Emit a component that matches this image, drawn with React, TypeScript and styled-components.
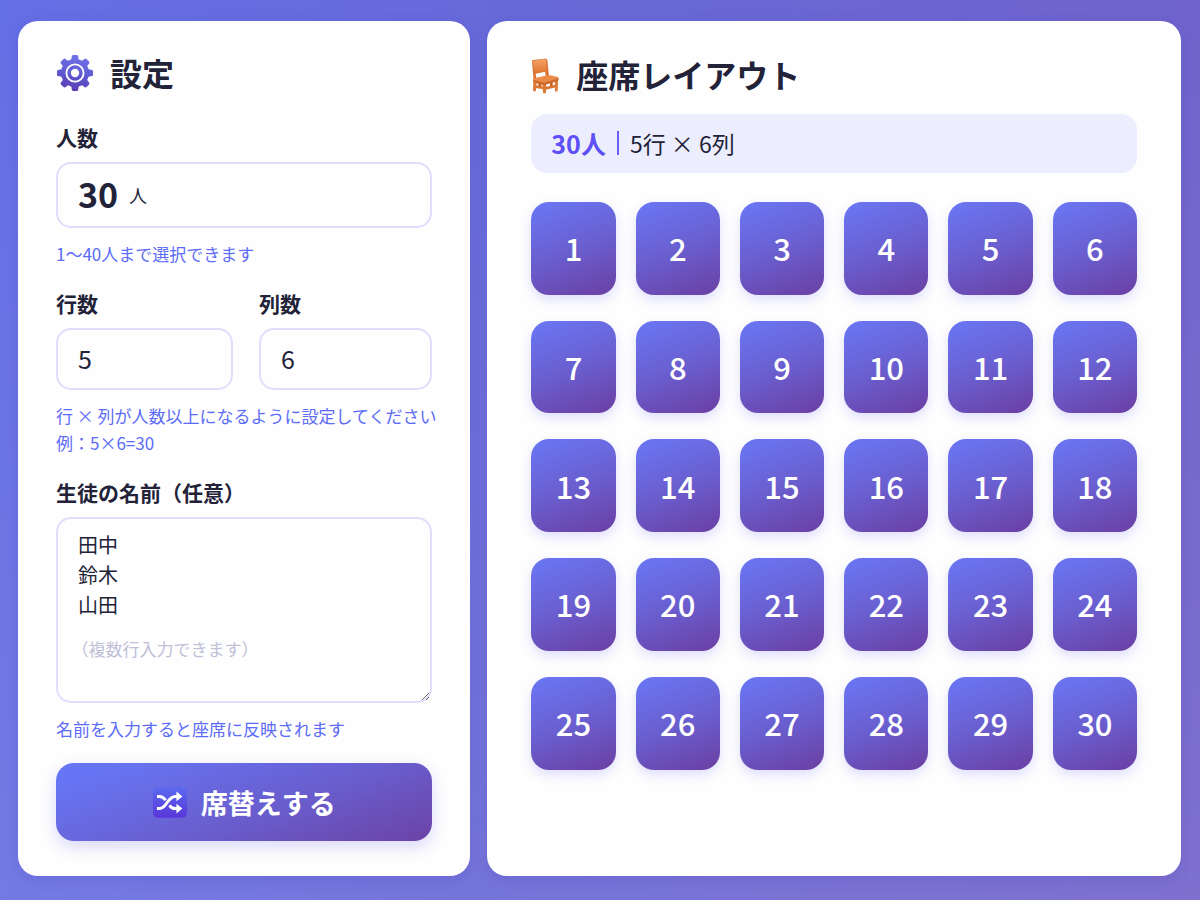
import React, { useState } from "react";
import styled, { createGlobalStyle } from "styled-components";

const GlobalStyle = createGlobalStyle`
  *, *::before, *::after { box-sizing: border-box; }
  body {
    margin: 0;
    font-family: "Noto Sans CJK JP", "Noto Sans", sans-serif;
    color: #222338;
  }
  input, textarea, button { font-family: inherit; color: inherit; }
`;

const Page = styled.main`
  min-height: 100vh;
  padding: 21px 19px 24px 18px;
  display: grid;
  grid-template-columns: minmax(0, 15fr) minmax(0, 23fr);
  gap: 17px;
  background:
    linear-gradient(180deg, rgba(255, 255, 255, 0), rgba(255, 255, 255, 0.09)),
    linear-gradient(100deg, #656fe5 0%, #6868d6 45%, #7262c9 100%);

  @media (max-width: 1100px) {
    grid-template-columns: minmax(0, 1fr);
  }
`;

const Card = styled.section<{ $pad: string }>`
  padding: ${(p) => p.$pad};
  border-radius: 20px;
  background: #fefefe;
  box-shadow: 0 4px 14px rgba(70, 60, 190, 0.2);
`;

const Title = styled.h2<{ $gap: number; $below: number }>`
  margin: 0 0 ${(p) => p.$below}px;
  min-height: 40px;
  display: flex;
  align-items: flex-start;
  gap: ${(p) => p.$gap}px;
  font-size: 32px;
  line-height: 36px;
  font-weight: 700;

  svg { flex: none; }
`;

const Field = styled.div`
  min-width: 0;
`;

const FieldPair = styled.div`
  display: grid;
  grid-template-columns: minmax(0, 51fr) minmax(0, 50fr);
  gap: 26px;
`;

const Group = styled.div`
  margin-bottom: 23px;

  &:last-of-type { margin-bottom: 21px; }
`;

const Label = styled.label`
  display: block;
  margin-bottom: 12px;
  font-size: 21px;
  line-height: 26px;
  font-weight: 700;
`;

const boxed = `
  border: 2px solid #dfdefc;
  border-radius: 15px;
  background: #fefefe;
`;

const CountBox = styled.div`
  ${boxed}
  height: 66px;
  padding: 0 20px;
  display: flex;
  align-items: center;
  gap: 11px;
`;

const CountInput = styled.input`
  width: 2ch;
  height: 62px;
  padding: 0 0 3px;
  border: 0;
  outline: 0;
  background: none;
  font-size: 34px;
  font-weight: 700;
`;

const Unit = styled.span`
  font-size: 18px;
  line-height: 28px;
`;

const NumberInput = styled.input`
  ${boxed}
  display: block;
  width: 100%;
  height: 62px;
  padding: 0 20px 3px;
  font-size: 25px;
`;

const Hint = styled.p`
  margin: 12px 0 0;
  font-size: 17px;
  line-height: 27px;
  color: #5c6cf6;

  @media (min-width: 1101px) {
    white-space: nowrap;
  }
`;

const NamesWrap = styled.div`
  position: relative;
`;

const NamesInput = styled.textarea`
  ${boxed}
  display: block;
  width: 100%;
  height: 186px;
  padding: 11px 20px;
  font-size: 20px;
  line-height: 30px;
  resize: vertical;
`;

const NamesNote = styled.span`
  position: absolute;
  left: 24px;
  top: 118px;
  font-size: 17px;
  line-height: 28px;
  font-feature-settings: "halt";
  color: #bfc0d8;
  pointer-events: none;
`;

const ShuffleButton = styled.button`
  width: 100%;
  height: 78px;
  padding: 0 20px;
  display: flex;
  align-items: center;
  justify-content: center;
  gap: 14px;
  border: 0;
  border-radius: 18px;
  background: linear-gradient(160deg, #6775f4 10%, #695ccb 60%, #6b43a6 100%);
  box-shadow: 0 6px 16px rgba(100, 95, 235, 0.24);
  color: #fff;
  font-size: 27px;
  font-weight: 700;
  cursor: pointer;
`;

const Summary = styled.p`
  margin: 0 0 29px;
  height: 59px;
  padding: 0 20px 2px;
  display: flex;
  align-items: center;
  gap: 11px;
  border-radius: 16px;
  background: #ecedfd;
  font-size: 23px;
  line-height: 36px;
`;

const SummaryCount = styled.strong`
  font-size: 25px;
  font-weight: 700;
  color: #5d50f6;
`;

const SummaryRule = styled.span`
  width: 2px;
  height: 24px;
  background: #6a5ff0;
`;

const SeatGrid = styled.ol<{ $columns: number }>`
  margin: 0;
  padding: 0;
  list-style: none;
  display: grid;
  grid-template-columns: repeat(${(p) => p.$columns}, minmax(0, 1fr));
  gap: 26px 20px;
`;

const Seat = styled.li`
  aspect-ratio: 10 / 11;
  display: flex;
  align-items: center;
  justify-content: center;
  border-radius: 18px;
  background: linear-gradient(160deg, #6a77f5 0%, #6a5fd0 50%, #6a3fa3 100%);
  box-shadow: 0 5px 12px rgba(100, 95, 245, 0.2);
  color: #fff;
  font-size: 31px;
  line-height: 40px;
  font-weight: 500;
`;

const GearIcon = () => (
  <svg width="38" height="38" viewBox="0 0 38 38" aria-hidden="true">
    <defs>
      <linearGradient id="gear" gradientUnits="userSpaceOnUse" x1="22" y1="0" x2="15" y2="38">
        <stop offset="0" stopColor="#7273ea" />
        <stop offset="0.5" stopColor="#5f5bd3" />
        <stop offset="1" stopColor="#5a38ae" />
      </linearGradient>
      <mask id="gearShape">
        <circle cx="19" cy="19" r="14" fill="#fff" />
        {[0, 45, 90, 135, 180, 225, 270, 315].map((a) => (
          <path
            key={a}
            d="M15 7 15.9 2Q16.1 1 17.2 1H20.8Q21.9 1 22.1 2L23 7Z"
            fill="#fff"
            transform={`rotate(${a} 19 19)`}
          />
        ))}
        <circle cx="19" cy="19" r="8.6" fill="none" stroke="#000" strokeWidth="1.9" />
        <circle cx="19" cy="19" r="4.2" fill="#000" />
      </mask>
    </defs>
    <rect width="38" height="38" fill="url(#gear)" mask="url(#gearShape)" />
  </svg>
);

const ChairIcon = () => (
  <svg width="30" height="38" viewBox="183 169 90 114" aria-hidden="true">
    <defs>
      <linearGradient id="wood" x1="0" y1="0" x2="0" y2="1">
        <stop offset="0" stopColor="#f3a468" />
        <stop offset="1" stopColor="#e07632" />
      </linearGradient>
    </defs>
    <path d="M205 246h9v18h-9zM240 244h8v18h-8z" fill="#c4621f" />
    <path d="M193 256l28 5v8l-28-5zM226 262l32-7v8l-32 7z" fill="#d9722f" />
    <path d="M186 186Q184 182 190 181L222 177Q230 175 232 181L237 231L228 233L225 216L197 222L200 242L191 243Z" fill="#d87434" />
    <path d="M188 184L222 178Q227 177 228 182L230 208Q230 213 225 214L198 219Q193 219 192 214Z" fill="url(#wood)" />
    <path d="M190 244h10l-2 29q-5 3-9 0zM217 250h12l-1 29q-5 4-9 0zM254 240h10l-1 34q-5 3-8 0z" fill="#dd7a36" />
    <path d="M189 239Q190 236 195 235L232 227Q236 226 240 227L264 232Q268 235 264 239L226 250Q222 251 218 250L192 245Q188 243 189 239Z" fill="#ec8b48" />
    <path d="M189 241L220 248Q223 249 227 248L266 236Q267 242 263 244L227 255Q223 256 218 255L192 249Q189 247 189 241Z" fill="#d0692b" />
  </svg>
);

const ShuffleIcon = () => (
  <svg width="34" height="31" viewBox="458 262 103 93" aria-hidden="true">
    <defs>
      <linearGradient id="tile" x1="0" y1="0" x2="0" y2="1">
        <stop offset="0" stopColor="#5b6af0" />
        <stop offset="1" stopColor="#5a36da" />
      </linearGradient>
    </defs>
    <rect x="458" y="262" width="103" height="93" rx="16" fill="url(#tile)" />
    <g fill="none" stroke="#fff" strokeWidth="9">
      <path d="M470 327h8C501 327 500 290 526 290h6" />
      <path d="M470 290h8C488 290 492 295 496 302" />
      <path d="M508 317C512 323 517 327 526 327h6" />
    </g>
    <path d="M529 275L547 290L529 305ZM529 312L547 327L529 342Z" fill="#fff" />
  </svg>
);

export default function App() {
  const [count, setCount] = useState("30");
  const [rows, setRows] = useState("5");
  const [columns, setColumns] = useState("6");
  const [names, setNames] = useState("田中\n鈴木\n山田");
  const seats = Array.from({ length: Math.min(Number(count) || 0, 40) }, (_, i) => i + 1);

  return (
    <>
      <GlobalStyle />
      <Page>
        <Card $pad="33px 38px 34px">
          <Title $gap={16} $below={30}>
            <GearIcon />
            設定
          </Title>
          <Group>
            <Label htmlFor="count">人数</Label>
            <CountBox>
              <CountInput id="count" inputMode="numeric" value={count} onChange={(e) => setCount(e.target.value)} />
              <Unit>人</Unit>
            </CountBox>
            <Hint>1～40人まで選択できます</Hint>
          </Group>
          <Group>
            <FieldPair>
              <Field>
                <Label htmlFor="rows">行数</Label>
                <NumberInput id="rows" inputMode="numeric" value={rows} onChange={(e) => setRows(e.target.value)} />
              </Field>
              <Field>
                <Label htmlFor="columns">列数</Label>
                <NumberInput id="columns" inputMode="numeric" value={columns} onChange={(e) => setColumns(e.target.value)} />
              </Field>
            </FieldPair>
            <Hint>
              行 × 列が人数以上になるように設定してください
              <br />
              例：5×6=30
            </Hint>
          </Group>
          <Group>
            <Label htmlFor="names">生徒の名前（任意）</Label>
            <NamesWrap>
              <NamesInput id="names" value={names} onChange={(e) => setNames(e.target.value)} />
              <NamesNote>（複数行入力できます）</NamesNote>
            </NamesWrap>
            <Hint>名前を入力すると座席に反映されます</Hint>
          </Group>
          <ShuffleButton type="button">
            <ShuffleIcon />
            席替えする
          </ShuffleButton>
        </Card>
        <Card $pad="35px 44px">
          <Title $gap={15} $below={18}>
            <ChairIcon />
            座席レイアウト
          </Title>
          <Summary>
            <SummaryCount>{count}人</SummaryCount>
            <SummaryRule />
            <span>
              {rows}行 × {columns}列
            </span>
          </Summary>
          <SeatGrid $columns={Number(columns) || 1}>
            {seats.map((n) => (
              <Seat key={n}>{n}</Seat>
            ))}
          </SeatGrid>
        </Card>
      </Page>
    </>
  );
}
